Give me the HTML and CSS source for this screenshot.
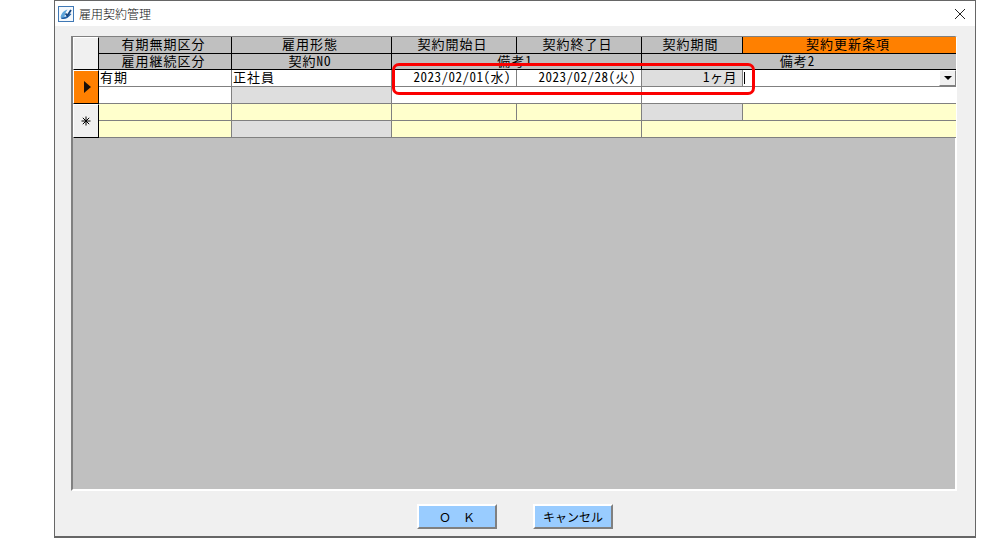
FILE: index.html
```html
<!DOCTYPE html>
<html lang="ja">
<head>
<meta charset="utf-8">
<title>雇用契約管理</title>
<link rel="stylesheet" href="styles.css">
</head>
<body>
<div class="window">
  <header class="titlebar">
    <svg class="app-icon" viewBox="0 0 16 16" width="16" height="16" aria-hidden="true">
      <rect x="0.5" y="0.5" width="15" height="15" fill="#f4f8fc" stroke="#3f78b5"/>
      <path d="M2.5 11.5C3 8 5.5 4.5 9.5 3.5C7.5 6 6.5 9 6.5 11.5Z" fill="#5ea6dc"/>
      <path d="M3 12.5C6 13.8 9.5 13 13.5 8L12 7.5C9.8 10.2 7 11.4 3 11.5Z" fill="#1c5fa8"/>
      <path d="M7.5 7.5L9.3 9.8L13 4" fill="none" stroke="#16467f" stroke-width="1.8"/>
    </svg>
    <span class="title">雇用契約管理</span>
    <svg class="close" viewBox="0 0 10 10" width="10" height="10" aria-hidden="true">
      <path d="M0 0L10 10M10 0L0 10" stroke="#222" stroke-width="1" fill="none"/>
    </svg>
  </header>

  <main class="content">
    <section class="panel">
      <div class="grid">
        <div class="corner"></div>
        <div class="cell head">有期無期区分</div>
        <div class="cell head">雇用形態</div>
        <div class="cell head">契約開始日</div>
        <div class="cell head">契約終了日</div>
        <div class="cell head">契約期間</div>
        <div class="cell head head-alert last">契約更新条項</div>

        <div class="cell head">雇用継続区分</div>
        <div class="cell head">契約NO</div>
        <div class="cell head span2">備考1</div>
        <div class="cell head span2 last">備考2</div>

        <div class="rowhead current"><span class="arrow"></span></div>
        <div class="cell white text">有期</div>
        <div class="cell white text">正社員</div>
        <div class="cell white num">2023/02/01(水)</div>
        <div class="cell white num">2023/02/28(火)</div>
        <div class="cell grey num">1ヶ月</div>
        <div class="cell white combo last"><span class="caret"></span><span class="drop"><span class="drop-arrow"></span></span></div>

        <div class="cell white"></div>
        <div class="cell grey"></div>
        <div class="cell white span2"></div>
        <div class="cell white span2 last"></div>

        <div class="rowhead new">
          <svg class="star" viewBox="0 0 10 10" width="10" height="10" aria-hidden="true">
            <path d="M5 0.5V9.5M0.5 5H9.5M1.8 1.8L8.2 8.2M8.2 1.8L1.8 8.2" stroke="#000" stroke-width="1" fill="none"/>
          </svg>
        </div>
        <div class="cell yellow"></div>
        <div class="cell yellow"></div>
        <div class="cell yellow"></div>
        <div class="cell yellow"></div>
        <div class="cell grey"></div>
        <div class="cell yellow last"></div>

        <div class="cell yellow"></div>
        <div class="cell grey"></div>
        <div class="cell yellow span2"></div>
        <div class="cell yellow span2 last"></div>
      </div>
    </section>

    <footer class="actions">
      <button class="btn" type="button">Ｏ　Ｋ</button>
      <button class="btn" type="button">キャンセル</button>
    </footer>
  </main>

  <div class="callout"></div>
</div>
</body>
</html>
```

FILE: styles.css
```css
* { box-sizing: border-box; }

html, body {
  margin: 0;
  padding: 0;
  background: #fff;
}

body {
  width: 1007px;
  height: 538px;
  overflow: hidden;
  padding-left: 54px;
  font-family: "Noto Sans CJK JP", "Noto Sans", sans-serif;
  font-size: 13px;
  font-weight: 400;
  font-feature-settings: "hwid";
  color: #000;
}

.window {
  position: relative;
  width: 922px;
  height: 538px;
  border: 1px solid #666;
  border-bottom-width: 2px;
  display: flex;
  flex-direction: column;
  background: #f0f0f0;
}

.titlebar {
  height: 25px;
  flex: none;
  background: #fff;
  display: flex;
  align-items: center;
  padding: 0 10px 0 3px;
}

.app-icon { flex: none; }

.title {
  margin-left: 5px;
  font-size: 12px;
  font-weight: 300;
  line-height: 16px;
  color: #111;
}

.close { margin-left: auto; }

.content {
  flex: 1;
  display: flex;
  flex-direction: column;
  padding: 10px 18px 0 16px;
}

.panel {
  height: 455px;
  background: #c0c0c0;
  border-style: solid;
  border-color: #808080 #fff #fff #808080;
  border-width: 1px 2px 2px 2px;
}

.grid {
  display: grid;
  grid-template-columns: 26px 133px 160px 125px 125px 101px 213px;
  grid-template-rows: 17px 16px 17px 17px 17px 17px;
}

.corner,
.rowhead {
  grid-row: span 2;
  grid-column: 1;
  border-top: 1px solid #fff;
  border-left: 1px solid #fff;
  border-right: 1px solid #000;
  border-bottom: 1px solid #000;
  background: #f0f0f0;
  display: flex;
  align-items: center;
  justify-content: center;
}

.current { background: #ff8000; }

.arrow {
  width: 0;
  height: 0;
  border-left: 7px solid #1a1008;
  border-top: 6px solid transparent;
  border-bottom: 6px solid transparent;
  margin-left: 2px;
  margin-bottom: 1px;
}

.cell {
  border-right: 1px solid #808080;
  border-bottom: 1px solid #808080;
  line-height: 14px;
  white-space: nowrap;
}

.last { border-right: 0; }
.span2 { grid-column: span 2; }

.head {
  background: #c0c0c0;
  border-right-color: #000;
  border-bottom-color: #000;
  padding-right: 3px;
  text-align: center;
  letter-spacing: 1px;
}

.head-alert { background: #ff8000; }

.white { background: #fff; }
.grey { background: #dedede; }
.yellow { background: #ffffcc; }

.text {
  padding-left: 1px;
  letter-spacing: 1px;
}

.num {
  text-align: right;
  padding-right: 5px;
  letter-spacing: 0.5px;
}

.combo {
  display: flex;
  align-items: center;
  justify-content: space-between;
  padding-left: 1px;
}

.caret {
  width: 1px;
  height: 12px;
  background: #000;
}

.drop {
  width: 17px;
  height: 16px;
  background: #f0f0f0;
  border-top: 1px solid #fff;
  border-left: 1px solid #fff;
  border-right: 1px solid #808080;
  border-bottom: 1px solid #808080;
  display: flex;
  align-items: center;
  justify-content: center;
}

.drop-arrow {
  width: 0;
  height: 0;
  border-top: 4px solid #000;
  border-left: 4px solid transparent;
  border-right: 4px solid transparent;
}

.actions {
  display: flex;
  justify-content: center;
  gap: 36px;
  padding: 13px 0 0 2px;
}

.btn {
  width: 80px;
  height: 25px;
  padding: 0;
  font: inherit;
  font-size: 12px;
  font-feature-settings: normal;
  line-height: 19px;
  color: #000;
  background: #99ccff;
  border-style: solid;
  border-width: 2px;
  border-color: #fff #808080 #808080 #fff;
  border-radius: 0;
}

.callout {
  position: absolute;
  left: 337px;
  top: 62px;
  width: 363px;
  height: 32px;
  border: 3px solid #fb0000;
  border-radius: 7px;
  pointer-events: none;
}
```
